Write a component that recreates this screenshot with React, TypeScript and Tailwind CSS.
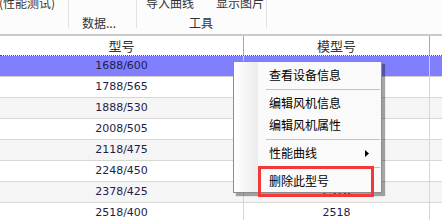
const rows = [
  ['1688/600', ''],
  ['1788/565', ''],
  ['1888/530', ''],
  ['2008/505', ''],
  ['2118/475', ''],
  ['2248/450', ''],
  ['2378/425', '2378'],
  ['2518/400', '2518'],
]

const cjk = "font-['Noto_Sans_CJK_SC',sans-serif]"

function MenuItem({ label, arrow }: { label: string; arrow?: boolean }) {
  return (
    <div className="h-[22px] flex items-center pl-[35px] pr-[12px] relative">
      <span className="text-[12px] leading-none text-black">{label}</span>
      {arrow && (
        <svg className="absolute right-[12px] top-[8px]" width="4" height="7" viewBox="0 0 4 7">
          <path d="M0 0 L4 3.5 L0 7 Z" fill="#000" />
        </svg>
      )}
    </div>
  )
}

function Sep() {
  return (
    <div className="h-[6px] flex items-center pl-[32px] pr-[1px]">
      <div className="h-px w-full bg-[#c4c4c4]" />
    </div>
  )
}

export default function App() {
  return (
    <div className={`w-[442px] h-[220px] overflow-hidden relative bg-white ${cjk}`}>
      {/* ribbon */}
      <div className="h-[36px] bg-[#fcfcfc] flex text-[12px] text-[#333] border-b-2 border-[#c9c9c9]">
        <div className="w-[69px] relative border-r border-[#e2e2e2] h-[28px]">
          <span className="absolute left-[-1px] top-[-6px] whitespace-nowrap">(性能测试)</span>
        </div>
        <div className="w-[68px] relative border-r border-[#e2e2e2] h-[28px]">
          <span className="absolute left-[13px] top-[14px] whitespace-nowrap">数据...</span>
        </div>
        <div className="w-[130px] relative border-r border-[#e2e2e2] h-[28px]">
          <span className="absolute left-[9px] top-[-6px] whitespace-nowrap">导入曲线</span>
          <span className="absolute left-[79px] top-[-6px] whitespace-nowrap">显示图片</span>
          <span className="absolute left-[52px] top-[14px] whitespace-nowrap">工具</span>
        </div>
      </div>

      {/* grid header */}
      <div className="h-[20px] flex bg-white text-[13px] text-[#333] border-b border-dotted border-[#505070]">
        <div className="w-[244px] border-r border-[#a8a8a8] flex items-center justify-center leading-none">型号</div>
        <div className="w-[186px] border-r border-[#a8a8a8] flex items-center justify-center leading-none">模型号</div>
        <div className="flex-1" />
      </div>

      {/* rows */}
      <div className="font-['DejaVu_Sans',sans-serif] text-[11px] text-[#1e1e46]">
        {rows.map((r, i) => {
          const sel = i === 0
          const bg = sel ? 'bg-[#8080ff]' : i % 2 === 1 ? 'bg-white' : 'bg-[#f5f5f5]'
          return (
            <div key={r[0]} className={`h-[21px] flex border-b ${sel ? 'border-[#d0d0d0]' : 'border-[#d6d6d6]'} ${bg}`}>
              <div className={`w-[244px] border-r ${sel ? 'border-[#c8c8ff]' : 'border-[#d6d6d6]'} flex items-center justify-center`}>
                {r[0]}
              </div>
              <div className={`w-[186px] border-r ${sel ? 'border-[#c8c8ff]' : 'border-[#d6d6d6]'} flex items-center justify-center`}>
                {r[1]}
              </div>
              <div className="flex-1" />
            </div>
          )
        })}
      </div>

      {/* context menu */}
      <div className="absolute left-[233px] top-[61px] w-[149px] border border-[#8c8c8c] bg-[#fafafa] shadow-[3px_3px_1px_rgba(0,0,0,0.35)] pt-[2px]">
        <div className="absolute left-0 top-0 bottom-0 w-[24px] bg-gradient-to-r from-[#ffffff] to-[#ececec]" />
        <div className="relative">
          <MenuItem label="查看设备信息" />
          <Sep />
          <MenuItem label="编辑风机信息" />
          <MenuItem label="编辑风机属性" />
          <Sep />
          <MenuItem label="性能曲线" arrow />
          <Sep />
          <MenuItem label="删除此型号" />
        </div>
      </div>

      {/* highlight box */}
      <div className="absolute left-[258px] top-[166px] w-[116px] h-[31px] border-[3px] border-[#f03a3a]" />
    </div>
  )
}
